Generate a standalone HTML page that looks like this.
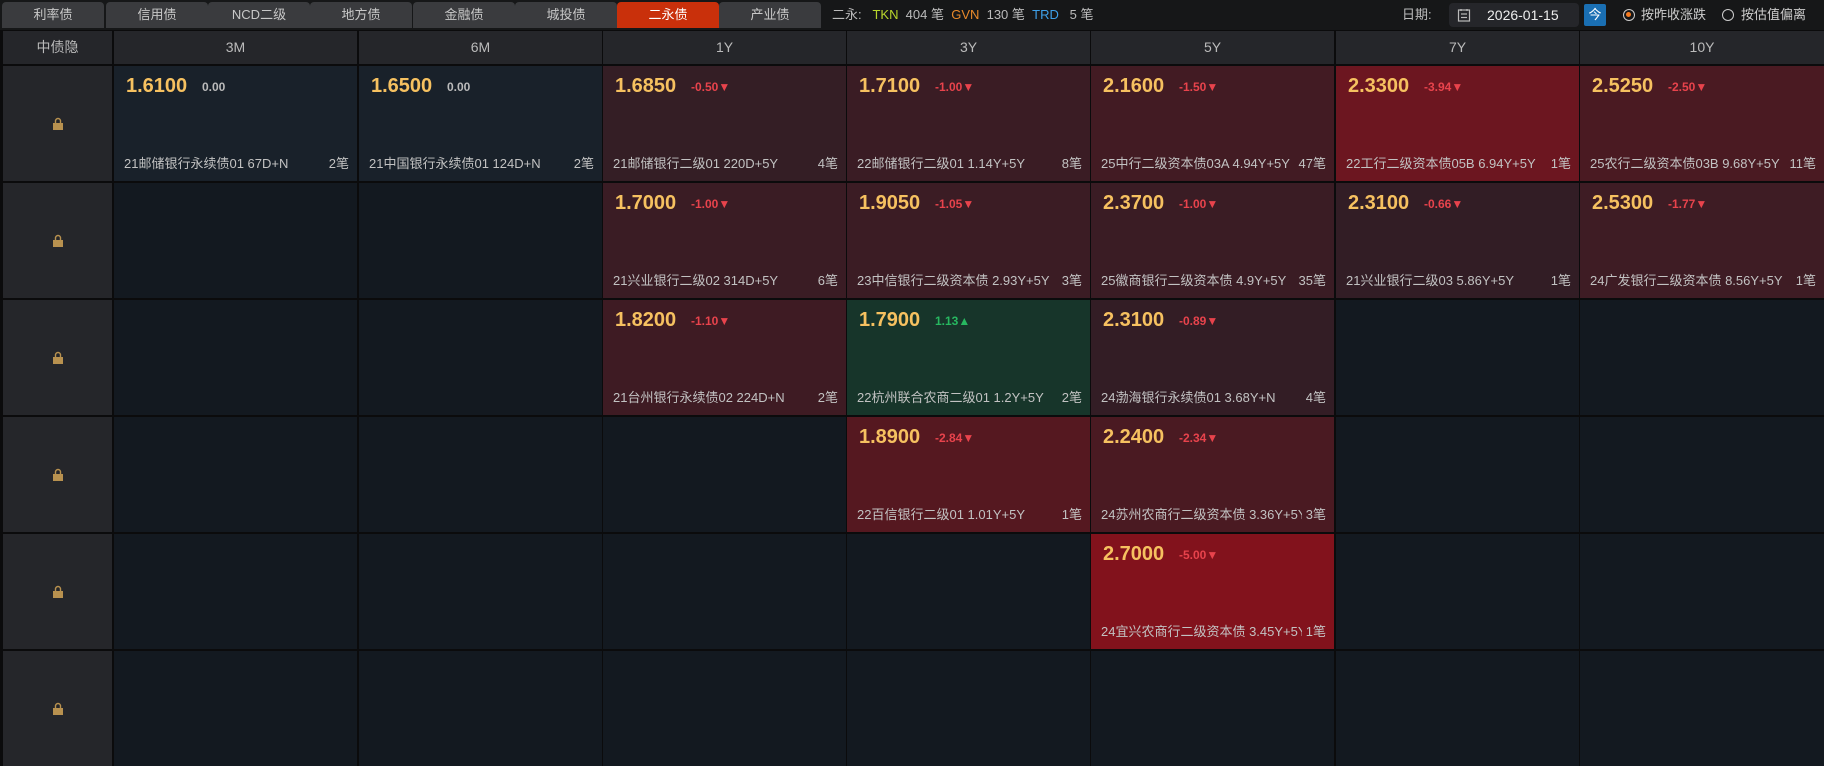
<!DOCTYPE html>
<html><head><meta charset="utf-8"><style>
*{box-sizing:border-box;margin:0;padding:0}
body{width:1824px;height:764px;background:#0b0b0c;font-family:"Liberation Sans","Noto Sans CJK SC",sans-serif;overflow:hidden;position:relative;color:#ccc}
.top{position:absolute;left:0;top:0;width:1824px;height:30px;background:#161718}
.tab{position:absolute;top:2px;height:26px;width:102px;background:#3a3b3e;border-radius:4px 4px 0 0;color:#c8c8c8;font-size:13px;text-align:center;line-height:26px}
.tab.on{background:#c9300b;color:#fff}
.st{position:absolute;top:0;line-height:30px;font-size:13px;color:#bbb}
.hdr{position:absolute;top:31px;height:33px;background:#25262a;color:#bbb;font-size:14px;text-align:center;line-height:33px}
.c{position:absolute;height:115px;background:#131920}
.l{background:#25262a}
.lock{position:absolute;left:50%;top:50%;margin:-7px 0 0 -5px;width:10px;height:13px}
.p{position:absolute;left:12px;top:9px;font-size:20px;font-weight:bold;color:#f6c160}
.d{position:absolute;left:88px;top:14px;font-size:12px;font-weight:bold;color:#e8434c}
.g{color:#27b860}.z{color:#bbb}
.b{position:absolute;left:10px;right:8px;top:87px;font-size:13px;color:#c2c2c2;white-space:nowrap;overflow:hidden}
.b span{position:absolute;right:0;top:0;background:inherit}
</style></head><body>
<div class="top"></div>
<div class="tab" style="left:2px">利率债</div>
<div class="tab" style="left:106px">信用债</div>
<div class="tab" style="left:208px">NCD二级</div>
<div class="tab" style="left:310px">地方债</div>
<div class="tab" style="left:413px">金融债</div>
<div class="tab" style="left:515px">城投债</div>
<div class="tab on" style="left:617px">二永债</div>
<div class="tab" style="left:719px">产业债</div>
<div class="st" style="left:832px">二永:&nbsp;&nbsp;&nbsp;<span style="color:#b8d62c">TKN</span>&nbsp; 404 笔&nbsp;&nbsp;<span style="color:#e8892a">GVN</span>&nbsp; 130 笔&nbsp;&nbsp;<span style="color:#3ea0e8">TRD</span>&nbsp;&nbsp; 5 笔</div>
<div class="st" style="left:1402px">日期:</div>
<div style="position:absolute;left:1449px;top:3px;width:130px;height:24px;background:#25262a;border-radius:4px;font-size:14px;color:#eee;line-height:24px">
<svg style="position:absolute;left:8px;top:5px" width="14" height="14" viewBox="0 0 14 14" fill="none" stroke="#bbb" stroke-width="1.2"><rect x="1.5" y="2" width="11" height="11"/><line x1="4" y1="1" x2="4" y2="3"/><line x1="10" y1="1" x2="10" y2="3"/><line x1="4" y1="6" x2="10" y2="6"/><line x1="4" y1="9.5" x2="10" y2="9.5"/></svg>
<span style="position:absolute;left:38px">2026-01-15</span></div>
<div style="position:absolute;left:1584px;top:4px;width:22px;height:22px;background:#1a6fb3;border-radius:2px;color:#fff;font-size:13px;text-align:center;line-height:22px">今</div>
<div style="position:absolute;left:1623px;top:9px;width:12px;height:12px;border:1.5px solid #ccc;border-radius:50%"><div style="margin:2px;width:5px;height:5px;background:#f47a20;border-radius:50%"></div></div>
<div class="st" style="left:1641px;color:#ccc">按昨收涨跌</div>
<div style="position:absolute;left:1722px;top:9px;width:12px;height:12px;border:1.5px solid #ccc;border-radius:50%"></div>
<div class="st" style="left:1741px;color:#ccc">按估值偏离</div>

<div class="hdr" style="left:3px;width:109px">中债隐</div>
<div class="hdr" style="left:114px;width:243px">3M</div>
<div class="hdr" style="left:359px;width:243px">6M</div>
<div class="hdr" style="left:603px;width:243px">1Y</div>
<div class="hdr" style="left:847px;width:243px">3Y</div>
<div class="hdr" style="left:1091px;width:243px">5Y</div>
<div class="hdr" style="left:1336px;width:243px">7Y</div>
<div class="hdr" style="left:1580px;width:244px">10Y</div>

<div id="g"></div>
<script>
var X=[114,359,603,847,1091,1336,1580],W=[243,243,243,243,243,243,244],Y=[66,183,300,417,534,651];
var D={
"0,0":["#19212a","1.6100","0.00","z","21邮储银行永续债01 67D+N","2笔"],
"0,1":["#19212a","1.6500","0.00","z","21中国银行永续债01 124D+N","2笔"],
"0,2":["#341e25","1.6850","-0.50▼","","21邮储银行二级01 220D+5Y","4笔"],
"0,3":["#3a1c24","1.7100","-1.00▼","","22邮储银行二级01 1.14Y+5Y","8笔"],
"0,4":["#421b23","2.1600","-1.50▼","","25中行二级资本债03A 4.94Y+5Y","47笔"],
"0,5":["#6c1620","2.3300","-3.94▼","","22工行二级资本债05B 6.94Y+5Y","1笔"],
"0,6":["#4a1a22","2.5250","-2.50▼","","25农行二级资本债03B 9.68Y+5Y","11笔"],
"1,2":["#3a1c24","1.7000","-1.00▼","","21兴业银行二级02 314D+5Y","6笔"],
"1,3":["#3b1c24","1.9050","-1.05▼","","23中信银行二级资本债 2.93Y+5Y","3笔"],
"1,4":["#3a1c24","2.3700","-1.00▼","","25徽商银行二级资本债 4.9Y+5Y","35笔"],
"1,5":["#321d25","2.3100","-0.66▼","","21兴业银行二级03 5.86Y+5Y","1笔"],
"1,6":["#3e1c24","2.5300","-1.77▼","","24广发银行二级资本债 8.56Y+5Y","1笔"],
"2,2":["#3e1b23","1.8200","-1.10▼","","21台州银行永续债02 224D+N","2笔"],
"2,3":["#17352a","1.7900","1.13▲","g","22杭州联合农商二级01 1.2Y+5Y","2笔"],
"2,4":["#331d25","2.3100","-0.89▼","","24渤海银行永续债01 3.68Y+N","4笔"],
"3,3":["#551820","1.8900","-2.84▼","","22百信银行二级01 1.01Y+5Y","1笔"],
"3,4":["#4a1a22","2.2400","-2.34▼","","24苏州农商行二级资本债 3.36Y+5Y","3笔"],
"4,4":["#82121c","2.7000","-5.00▼","","24宜兴农商行二级资本债 3.45Y+5Y","1笔"]};
var h="";
for(var r=0;r<6;r++){
h+='<div class="c l" style="left:3px;width:109px;top:'+Y[r]+'px"><svg class="lock" viewBox="0 0 10 13"><path d="M2.5 6V4a2.5 2.5 0 0 1 5 0v2" fill="none" stroke="#b8914f" stroke-width="1.4"/><rect x="0" y="6" width="10" height="7" fill="#b8914f"/></svg></div>';
for(var c=0;c<7;c++){var d=D[r+","+c];
if(d){h+='<div class="c" style="left:'+X[c]+'px;width:'+W[c]+'px;top:'+Y[r]+'px;background:'+d[0]+'"><div class="p">'+d[1]+'</div><div class="d '+d[3]+'">'+d[2]+'</div><div class="b" style="background:'+d[0]+'">'+d[4]+'<span>&nbsp;'+d[5]+'</span></div></div>';}
else h+='<div class="c" style="left:'+X[c]+'px;width:'+W[c]+'px;top:'+Y[r]+'px"></div>';}}
document.getElementById("g").innerHTML=h;
</script>
</body></html>
